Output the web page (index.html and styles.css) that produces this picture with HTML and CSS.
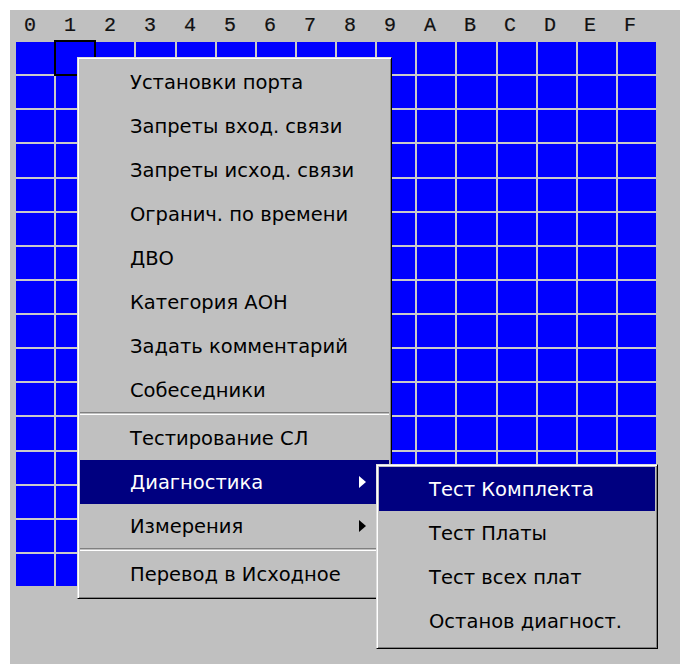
FILE: index.html
```html
<!DOCTYPE html>
<html lang="ru">
<head>
<meta charset="utf-8">
<title>Порты</title>
<link rel="stylesheet" href="styles.css">
</head>
<body>
<div class="panel">
  <div class="cols">
    <span>0</span><span>1</span><span>2</span><span>3</span><span>4</span><span>5</span><span>6</span><span>7</span>
    <span>8</span><span>9</span><span>A</span><span>B</span><span>C</span><span>D</span><span>E</span><span>F</span>
  </div>
  <div class="ports" id="ports"></div>
</div>

<div class="menu main-menu">
  <div class="item">Установки порта</div>
  <div class="item">Запреты вход. связи</div>
  <div class="item">Запреты исход. связи</div>
  <div class="item">Огранич. по времени</div>
  <div class="item">ДВО</div>
  <div class="item">Категория АОН</div>
  <div class="item">Задать комментарий</div>
  <div class="item">Собеседники</div>
  <div class="sep"></div>
  <div class="item">Тестирование СЛ</div>
  <div class="item active">Диагностика
    <svg class="arrow" width="7" height="12" viewBox="0 0 7 12"><polygon points="0,0 7,6 0,12"/></svg>
  </div>
  <div class="item">Измерения
    <svg class="arrow" width="7" height="12" viewBox="0 0 7 12"><polygon points="0,0 7,6 0,12"/></svg>
  </div>
  <div class="sep"></div>
  <div class="item">Перевод в Исходное</div>
</div>

<div class="menu sub-menu">
  <div class="item active">Тест Комплекта</div>
  <div class="item">Тест Платы</div>
  <div class="item">Тест всех плат</div>
  <div class="item">Останов диагност.</div>
</div>

<script src="script.js"></script>
</body>
</html>
```

FILE: styles.css
```css
html, body {
  margin: 0;
  padding: 0;
  background: #ffffff;
}

.panel {
  margin: 10px 0 0 10px;
  width: 670px;
  height: 654px;
  background: #c0c0c0;
  box-sizing: border-box;
}

.cols {
  display: flex;
  height: 32px;
  align-items: center;
}

.cols span {
  width: 40px;
  text-align: center;
  font-family: "Liberation Mono", "Courier New", monospace;
  font-size: 20px;
  color: #111;
  padding-bottom: 2px;
  -webkit-text-stroke: 0.2px #111;
}

.ports {
  margin-left: 6px;
  width: 640px;
  height: 544px;
  display: grid;
  grid-template-columns: repeat(16, 1fr);
  grid-template-rows: repeat(16, 1fr);
  gap: 2px;
  background: #cacaca;
}

.port {
  background: #0000ff;
}

.port.selected {
  outline: 2px solid #000;
  position: relative;
  z-index: 1;
}

.menu {
  position: absolute;
  background: #c0c0c0;
  border-top: 1px solid #dfdfdf;
  border-left: 1px solid #dfdfdf;
  border-right: 1px solid #000;
  border-bottom: 1px solid #000;
  box-shadow: inset 1px 1px #fff, inset -1px -1px #808080;
  padding: 2px;
  box-sizing: border-box;
  display: flex;
  flex-direction: column;
  font-family: "DejaVu Sans", Verdana, sans-serif;
  font-size: 19.5px;
  color: #000;
}

.main-menu {
  left: 77px;
  top: 57px;
  width: 315px;
  z-index: 2;
}

.sub-menu {
  left: 376px;
  top: 464px;
  width: 282px;
  padding-bottom: 5px;
  z-index: 3;
}

.item {
  height: 44px;
  display: flex;
  align-items: center;
  padding: 0 23px 0 50px;
  white-space: nowrap;
}

.item.active {
  background: #000080;
  color: #fff;
}

.arrow {
  margin-left: auto;
  fill: #000;
}

.item.active .arrow {
  fill: #fff;
}

.sep {
  height: 1px;
  border-top: 1px solid #808080;
  border-bottom: 1px solid #fff;
  margin-bottom: 1px;
}
```

FILE: script.js
```js
// Fill the 16x16 port matrix; port 1 of row 0 is the current selection.
const ports = document.getElementById('ports');
for (let row = 0; row < 16; row++) {
  for (let col = 0; col < 16; col++) {
    const cell = document.createElement('div');
    cell.className = 'port';
    if (row === 0 && col === 1) cell.classList.add('selected');
    ports.appendChild(cell);
  }
}
```
